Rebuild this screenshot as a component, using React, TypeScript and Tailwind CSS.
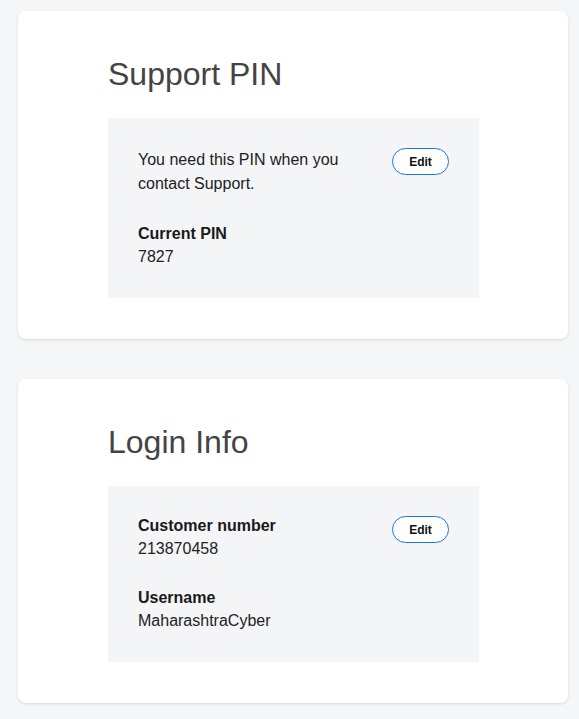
import type { ReactNode } from "react";

function EditButton({ className = "" }: { className?: string }) {
  return (
    <button
      type="button"
      className={`flex h-[27px] w-[57px] shrink-0 items-center justify-center rounded-full border border-[#1a73e8] bg-white text-[12px] font-bold leading-none text-[#111] ${className}`}
    >
      Edit
    </button>
  );
}

function Card({ title, children }: { title: string; children: ReactNode }) {
  return (
    <section className="rounded-lg bg-white pb-[41px] pl-[90px] pr-[89px] pt-[44px] shadow-[0_1px_3px_rgba(0,0,0,0.12)]">
      <h2 className="text-[32px] font-normal leading-[38px] text-[#444]">{title}</h2>
      {children}
    </section>
  );
}

function Field({ label, value, className = "" }: { label: string; value: string; className?: string }) {
  return (
    <div className={`text-[16px] leading-[23px] ${className}`}>
      <p className="font-bold text-[#1a1a1a]">{label}</p>
      <p className="text-[#222]">{value}</p>
    </div>
  );
}

export default function App() {
  return (
    <div
      className="min-h-[719px] bg-[#f5f6f8] pb-4 pl-[18px] pr-[11px] pt-[11px]"
      style={{ fontFamily: '"Liberation Sans", Arial, sans-serif' }}
    >
      <div className="flex flex-col gap-[40px]">
        <Card title="Support PIN">
          <div className="mt-[25px] flex gap-[24px] bg-[#f4f5f7] p-[30px]">
            <div className="flex-1">
              <p className="text-[16px] leading-[24px] text-[#222]">
                You need this PIN when you contact Support.
              </p>
              <Field label="Current PIN" value="7827" className="mt-[26px]" />
            </div>
            <EditButton />
          </div>
        </Card>

        <Card title="Login Info">
          <div className="mt-[25px] flex gap-[24px] bg-[#f4f5f7] px-[30px] pb-[30px] pt-[28px]">
            <div className="flex-1">
              <Field label="Customer number" value="213870458" />
              <Field label="Username" value="MaharashtraCyber" className="mt-[26px]" />
            </div>
            <EditButton className="mt-[2px]" />
          </div>
        </Card>
      </div>
    </div>
  );
}
